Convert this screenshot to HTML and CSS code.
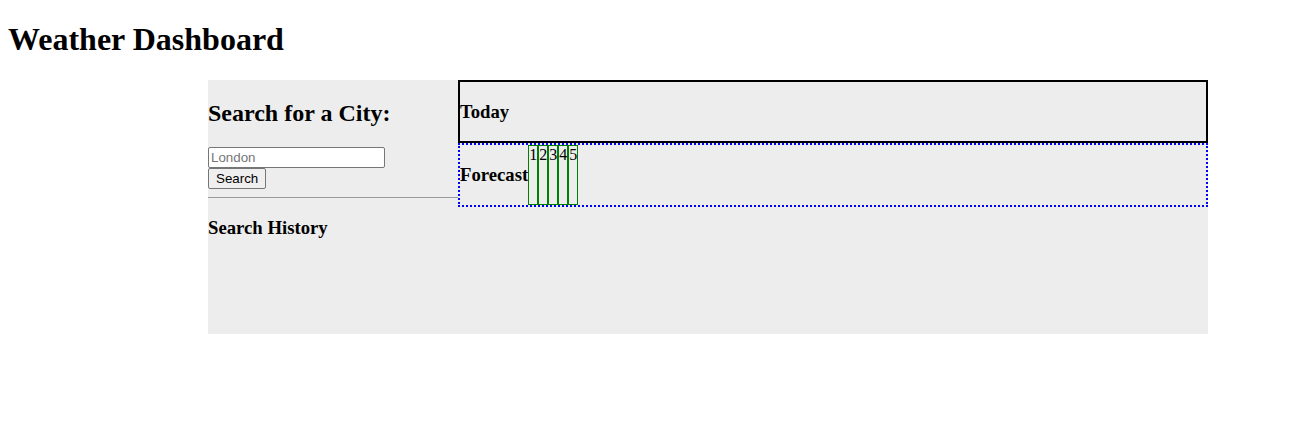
FILE: index.html
```html
<!DOCTYPE html>
<html lang="en">

<head>
    <meta charset="UTF-8">
    <meta name="viewport" content="width=device-width, initial-scale=1.0">
    <title>Weather Dashboard</title>
    <link rel="stylesheet" href="styles.css">
</head>

<body>
    <h1>Weather Dashboard</h1>

    <main class="dashboard">
        <aside class="search-panel">
            <h2>Search for a City:</h2>
            <input id="cityInput" class="city-input" type="text" placeholder="London"><br>
            <button class="search-btn">Search</button>
            <hr>
            <h3>Search History</h3>
            <ul id="history" class="history"></ul>
        </aside>

        <section class="weather">
            <div class="today">
                <h3>Today</h3>
            </div>
            <div class="forecast">
                <h3>Forecast</h3>
                <div class="day">1</div>
                <div class="day">2</div>
                <div class="day">3</div>
                <div class="day">4</div>
                <div class="day">5</div>
            </div>
        </section>
    </main>
</body>

</html>
```

FILE: styles.css
```css
body {
    font-family: 'Liberation Serif', 'Times New Roman', serif;
    color: #000;
    margin: 0 8px 8px;
}

h1 {
    font-size: 2em;
    margin: 0.67em 0;
}

.dashboard {
    display: flex;
    width: 1000px;
    height: 254px;
    margin-left: 200px;
    background: #ededed;
}

.search-panel {
    width: 250px;
    flex-shrink: 0;
}

.search-panel h2 {
    font-size: 1.5em;
    margin: 0.83em 0;
}

.city-input {
    width: 177px;
    height: 21px;
    box-sizing: border-box;
    padding: 1px 2px;
    margin: 0;
    border: 1px solid #767676;
    border-radius: 2px;
    font-family: 'Liberation Sans', Arial, sans-serif;
    font-size: 13.333px;
}

.city-input::placeholder {
    color: #757575;
}

.search-btn {
    height: 21px;
    padding: 1px 7px;
    margin: 0;
    border: 1px solid #767676;
    border-radius: 2px;
    background: #efefef;
    font-family: 'Liberation Sans', Arial, sans-serif;
    font-size: 13.333px;
    color: #000;
}

hr {
    margin: 8px 0;
    border: none;
    border-top: 1px solid #9a9a9a;
    border-bottom: 1px solid #eeeeee;
}

h3 {
    font-size: 1.17em;
    margin: 1em 0;
}

.history {
    margin: 0;
    padding: 0;
    list-style: none;
}

.weather {
    flex: 1;
}

.today {
    border: 2px solid #000;
}

.forecast {
    display: flex;
    border: 2px dotted #0000ff;
}

.day {
    border: 1px solid #008000;
}
```
